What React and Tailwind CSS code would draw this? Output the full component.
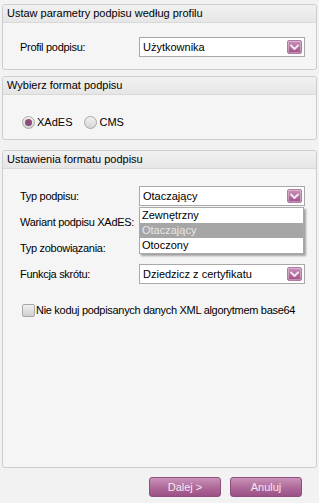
import React from "react";

const font = { fontFamily: '"Liberation Sans", Arial, sans-serif' };

function Arrow() {
  return (
    <div className="w-[15px] h-[14px] rounded-[2px] border border-[#b07aa2] bg-gradient-to-b from-[#c98fb8] to-[#a0508a] flex items-center justify-center shadow-[inset_0_0_0_1px_rgba(255,255,255,0.35)]">
      <svg width="9" height="7" viewBox="0 0 9 7">
        <path d="M1 1.5 L4.5 5 L8 1.5" fill="none" stroke="#f4e6f0" strokeWidth="2" strokeLinecap="round" strokeLinejoin="round" />
      </svg>
    </div>
  );
}

function Select({ value }) {
  return (
    <div className="w-[166px] h-[20px] shrink-0 bg-white border border-[#a9a9a9] flex items-center justify-between pl-[3px] pr-[2px]">
      <span className="text-[11px] text-black leading-none whitespace-nowrap">{value}</span>
      <Arrow />
    </div>
  );
}

function Group({ title, children, className = "" }) {
  return (
    <div className={"mx-[2px] border border-[#cdcdcd] rounded-[3px] bg-[#f5f5f5] flex flex-col " + className}>
      <div className="h-[18px] px-[4px] flex items-center bg-gradient-to-b from-[#f1f1f1] to-[#e6e6e6] border-b border-[#d9d9d9] rounded-t-[3px] text-[11px] text-black whitespace-nowrap">
        {title}
      </div>
      {children}
    </div>
  );
}

function Radio({ checked, label }) {
  return (
    <div className="flex items-center gap-[2px]">
      <div className="w-[13px] h-[13px] rounded-full border border-[#a8a8a8] bg-gradient-to-b from-[#f2f2f2] to-[#d4d4d4] flex items-center justify-center">
        {checked && <div className="w-[7px] h-[7px] rounded-full bg-[#8c4d7b]" />}
      </div>
      <span className="text-[11px] text-black">{label}</span>
    </div>
  );
}

function Row({ label, children }) {
  return (
    <div className="h-[20px] flex items-center">
      <span className="w-[119px] shrink-0 text-[11px] tracking-[-0.3px] text-black whitespace-nowrap">{label}</span>
      {children}
    </div>
  );
}

function Button({ children }) {
  return (
    <div className="w-[72px] h-[20px] rounded-[3px] border border-[#8f4d7e] bg-gradient-to-b from-[#c993b9] via-[#b06c9c] to-[#9b5086] flex items-center justify-center text-[11px] text-[#f6e9f2]">
      {children}
    </div>
  );
}

export default function App() {
  return (
    <div className="w-[319px] h-[503px] bg-[#f2f2f2] flex flex-col pt-[4px]" style={font}>
      <Group title="Ustaw parametry podpisu według profilu" className="h-[66px]">
        <div className="pl-[17px] pt-[14px]">
          <Row label="Profil podpisu:">
            <Select value="Użytkownika" />
          </Row>
        </div>
      </Group>

      <Group title="Wybierz format podpisu" className="h-[64px] mt-[6px]">
        <div className="pl-[19px] pt-[19px] flex items-center gap-[12px]">
          <Radio checked label="XAdES" />
          <Radio label="CMS" />
        </div>
      </Group>

      <Group title="Ustawienia formatu podpisu" className="h-[318px] mt-[10px]">
        <div className="pl-[17px] pt-[17px] flex flex-col gap-[6px] relative">
          <div className="relative">
            <Row label="Typ podpisu:">
              <Select value="Otaczający" />
            </Row>
            <div className="absolute left-[119px] top-[21px] w-[165px] bg-white border border-[#a9a9a9] shadow-[2px_2px_2px_rgba(0,0,0,0.35)] z-10 flex flex-col text-[11px]">
              <div className="h-[15px] px-[2px] flex items-center text-black">Zewnętrzny</div>
              <div className="h-[15px] px-[2px] flex items-center bg-[#a6a6a6] text-[#e6e6e6]">Otaczający</div>
              <div className="h-[15px] px-[2px] flex items-center text-black">Otoczony</div>
            </div>
          </div>
          <Row label="Wariant podpisu XAdES:" />
          <Row label="Typ zobowiązania:" />
          <Row label="Funkcja skrótu:">
            <Select value="Dziedzicz z certyfikatu" />
          </Row>
          <div className="mt-[12px] flex items-center gap-[1px] pl-[2px]">
            <div className="w-[13px] h-[13px] shrink-0 rounded-[2px] border border-[#a8a8a8] bg-gradient-to-b from-[#f0f0f0] to-[#d0d0d0]" />
            <span className="text-[11px] tracking-[-0.3px] text-black whitespace-nowrap">Nie koduj podpisanych danych XML algorytmem base64</span>
          </div>
        </div>
      </Group>

      <div className="flex justify-end gap-[9px] pr-[17px] pt-[9px]">
        <Button>Dalej &gt;</Button>
        <Button>Anuluj</Button>
      </div>
    </div>
  );
}
